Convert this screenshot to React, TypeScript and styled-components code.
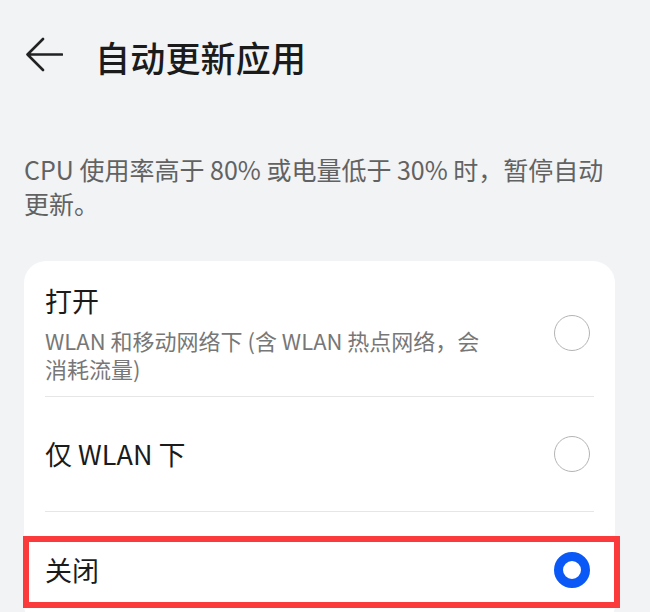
import styled, { createGlobalStyle } from "styled-components";

const GlobalStyle = createGlobalStyle`
  html, body {
    margin: 0;
    padding: 0;
    background: #f1f3f5;
  }
  body {
    font-family: "Noto Sans CJK SC", "Noto Sans", sans-serif;
    -webkit-font-smoothing: antialiased;
  }
`;

type Option = {
  key: string;
  title: string;
  subtitle?: string;
};

const options: Option[] = [
  { key: "on", title: "打开", subtitle: "WLAN 和移动网络下 (含 WLAN 热点网络，会消耗流量)" },
  { key: "wlan", title: "仅 WLAN 下" },
  { key: "off", title: "关闭" },
];

export default function App() {
  const selected = "off";

  return (
    <Page>
      <GlobalStyle />
      <Header>
        <BackButton aria-label="返回">
          <svg width="38" height="36" viewBox="0 0 38 36" fill="none">
            <path
              d="M2.5 17.5 H37 M18 2 L2.5 17.5 L18 33"
              stroke="#222"
              strokeWidth="2.6"
              strokeLinecap="round"
              strokeLinejoin="round"
            />
          </svg>
        </BackButton>
        <Title>自动更新应用</Title>
      </Header>

      <Description>CPU 使用率高于 80% 或电量低于 30% 时，暂停自动更新。</Description>

      <Card>
        {options.map((opt, i) => (
          <Row key={opt.key} last={i === options.length - 1} tall={!!opt.subtitle}>
            <RowText>
              <RowTitle>{opt.title}</RowTitle>
              {opt.subtitle && <RowSubtitle>{opt.subtitle}</RowSubtitle>}
            </RowText>
            <Radio checked={opt.key === selected} />
            {opt.key === selected && <Highlight />}
          </Row>
        ))}
      </Card>
    </Page>
  );
}

const Page = styled.div`
  padding: 0 35px 0 24px;
  min-height: 612px;
  box-sizing: border-box;
`;

const Header = styled.header`
  height: 112px;
  display: flex;
  align-items: center;
  gap: 32px;
  padding-left: 1px;
`;

const BackButton = styled.button`
  border: none;
  background: transparent;
  padding: 0;
  width: 38px;
  height: 36px;
  display: flex;
  align-items: center;
  margin-top: -2px;
`;

const Title = styled.h1`
  margin: 0;
  font-size: 35px;
  font-weight: 500;
  color: #1b1b1b;
  letter-spacing: 0.2px;
`;

const Description = styled.p`
  margin: 40px -11px 0 0;
  font-size: 25px;
  line-height: 34px;
  color: #626262;
`;

const Card = styled.section`
  margin-top: 41px;
  background: #ffffff;
  border-radius: 22px;
  padding: 0 21px;
`;

const Row = styled.div<{ last: boolean; tall: boolean }>`
  position: relative;
  display: flex;
  align-items: center;
  justify-content: space-between;
  gap: 20px;
  min-height: ${(p) => (p.tall ? "136px" : "115px")};
  padding: ${(p) => (p.tall ? "20px 0 12px" : "0")};
  box-sizing: border-box;
  border-bottom: ${(p) => (p.last ? "none" : "1px solid #e6e6e6")};
`;

const RowText = styled.div`
  display: flex;
  flex-direction: column;
  max-width: 450px;
`;

const RowTitle = styled.span`
  font-size: 27px;
  line-height: 36px;
  color: #1b1b1b;
`;

const RowSubtitle = styled.span`
  margin-top: 7px;
  font-size: 22px;
  line-height: 28px;
  color: #777777;
`;

const Radio = styled.span<{ checked: boolean }>`
  flex: none;
  width: 36px;
  height: 36px;
  margin-right: 4px;
  border-radius: 50%;
  box-sizing: border-box;
  background: #ffffff;
  border: ${(p) => (p.checked ? "9px solid #0a59f7" : "1.6px solid #b4b4b4")};
`;

const Highlight = styled.div`
  position: absolute;
  left: -22px;
  right: -26px;
  top: 24px;
  height: 72px;
  border: 6px solid #fb3a3c;
  box-sizing: border-box;
  pointer-events: none;
`;
